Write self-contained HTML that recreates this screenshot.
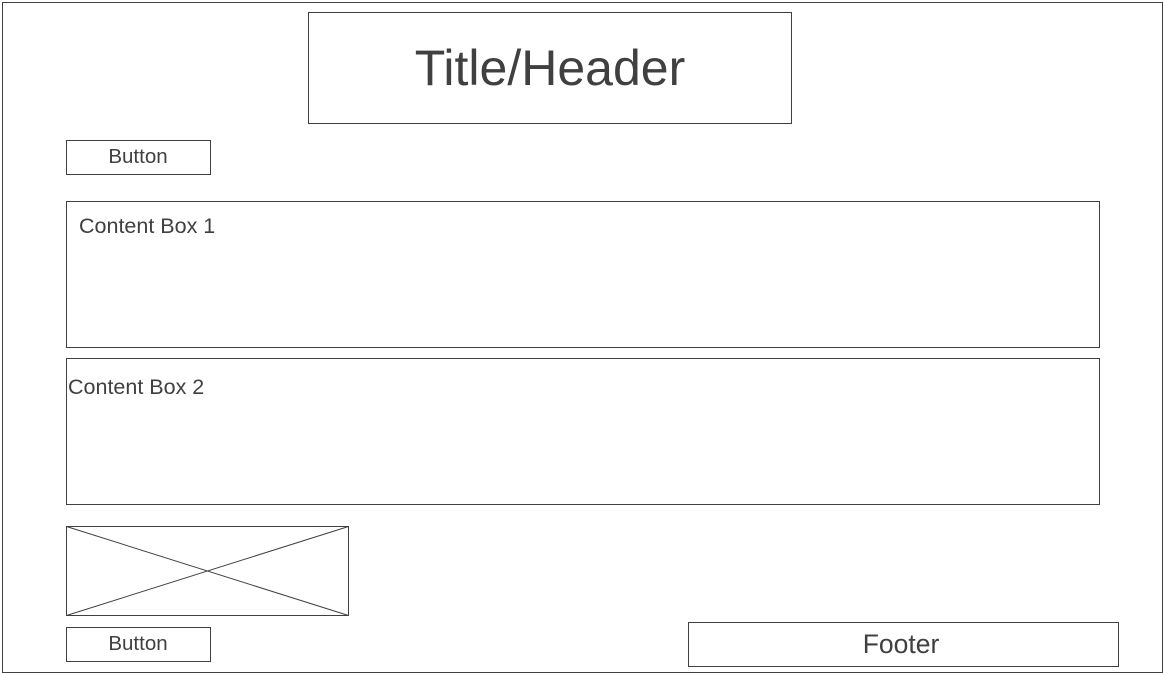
<!DOCTYPE html>
<html><head><style>html,body{margin:0;padding:0;background:#fff}svg{display:block}text{font-family:"Liberation Sans",sans-serif;fill:#404040}</style></head>
<body>
<svg width="1164" height="673" xmlns="http://www.w3.org/2000/svg">
<g fill="none" stroke="#404040" stroke-width="1">
<rect x="2.5" y="2.5" width="1160" height="670"/>
<rect x="308.5" y="12.5" width="483" height="111"/>
<rect x="66.5" y="140.5" width="144" height="34"/>
<rect x="66.5" y="201.5" width="1033" height="146"/>
<rect x="66.5" y="358.5" width="1033" height="146"/>
<rect x="66.5" y="526.5" width="282" height="89"/>
<line x1="66.5" y1="526.5" x2="348.5" y2="615.5"/>
<line x1="66.5" y1="615.5" x2="348.5" y2="526.5"/>
<rect x="66.5" y="627.5" width="144" height="34"/>
<rect x="688.5" y="622.5" width="430" height="44"/>
</g>
<text x="550" y="85" font-size="50" text-anchor="middle">Title/Header</text>
<text x="138" y="163" font-size="20.5" text-anchor="middle">Button</text>
<text x="79" y="233" font-size="21.5">Content Box 1</text>
<text x="68" y="394" font-size="21.5">Content Box 2</text>
<text x="138" y="650" font-size="20.5" text-anchor="middle">Button</text>
<text x="901" y="653" font-size="26.5" text-anchor="middle">Footer</text>
</svg>
</body></html>
